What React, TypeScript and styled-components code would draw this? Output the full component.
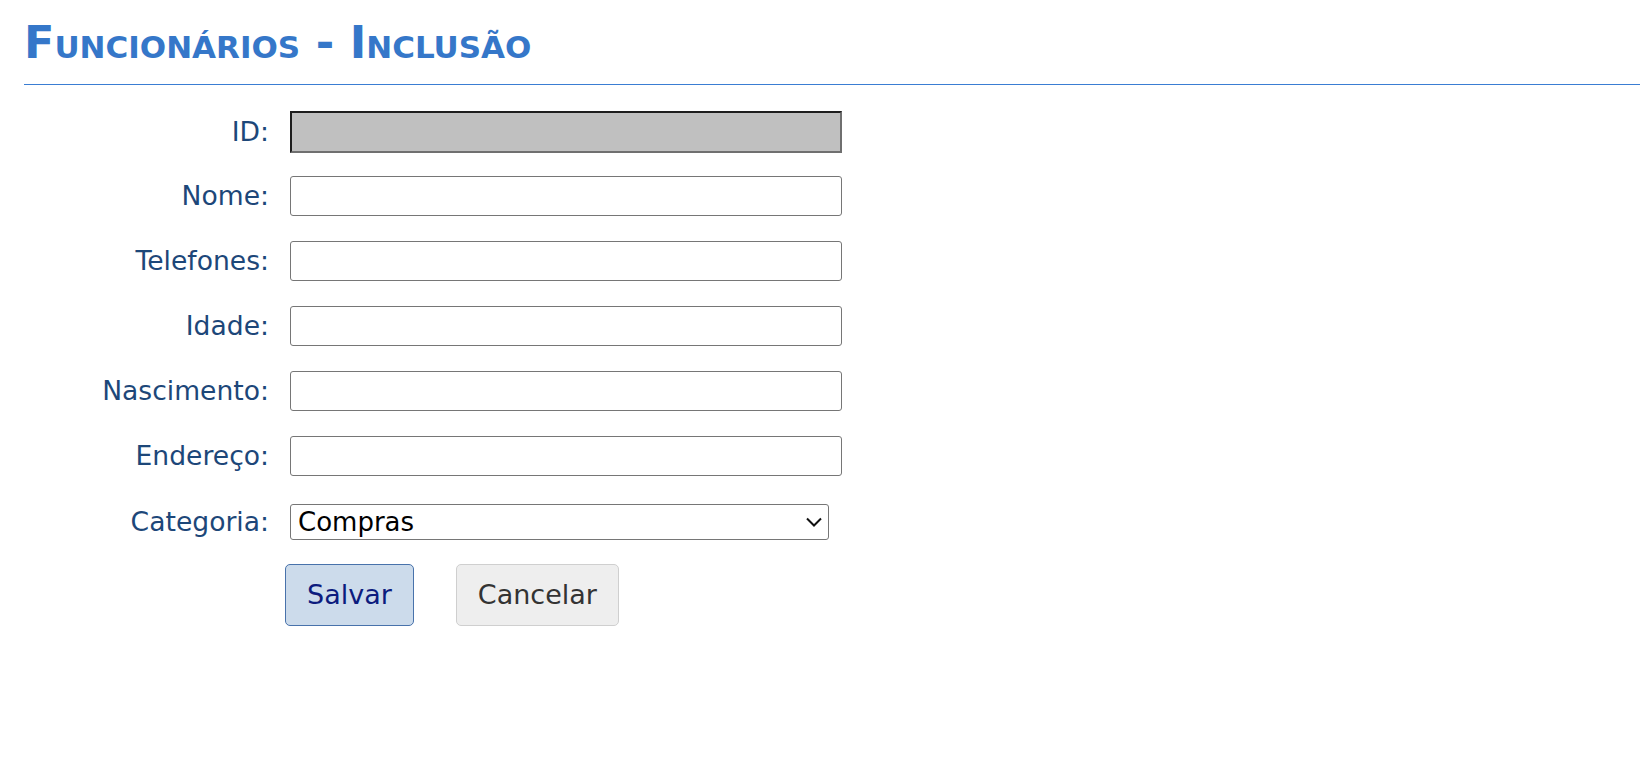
import React from "react";
import styled, { createGlobalStyle } from "styled-components";

const GlobalStyle = createGlobalStyle`
  html, body {
    margin: 0;
    padding: 0;
    background: #ffffff;
  }
  body {
    font-family: "DejaVu Sans", Verdana, sans-serif;
  }
  * {
    box-sizing: border-box;
  }
`;

const Page = styled.div`
  padding-left: 24px;
`;

const Header = styled.header`
  border-bottom: 1px solid #3a7dd3;
  padding: 16.5px 0 16px 0;
`;

const Title = styled.h1`
  margin: 0;
  font-family: "DejaVu Sans", Verdana, sans-serif;
  font-size: 44.5px;
  font-weight: bold;
  font-variant: small-caps;
  line-height: normal;
  color: #3577c9;
`;

const Form = styled.form`
  display: flex;
  flex-direction: column;
  margin-top: 26px;
`;

const Row = styled.div<{ $height: number; $gap: number }>`
  display: grid;
  grid-template-columns: 245px 552px;
  column-gap: 21px;
  align-items: center;
  height: ${(p) => p.$height}px;
  margin-bottom: ${(p) => p.$gap}px;
`;

const Label = styled.label`
  justify-self: end;
  font-family: "DejaVu Sans", Verdana, sans-serif;
  font-size: 26.6px;
  color: #1d4779;
  white-space: nowrap;
`;

const TextInput = styled.input`
  width: 552px;
  height: 40px;
  border: 1px solid #767676;
  border-radius: 3px;
  background: #ffffff;
  padding: 0 6px;
  font-family: "DejaVu Sans", Verdana, sans-serif;
  font-size: 26px;
  outline: none;
`;

const ReadOnlyInput = styled.input`
  width: 552px;
  height: 42px;
  border-style: solid;
  border-width: 2px;
  border-color: #1e1e1e #6f6f6f #6f6f6f #1e1e1e;
  border-radius: 0;
  background: #c0c0c0;
  padding: 0 6px;
  font-family: "DejaVu Sans", Verdana, sans-serif;
  font-size: 26px;
  outline: none;
`;

const SelectWrap = styled.div`
  position: relative;
  width: 539px;
  height: 36px;
`;

const Select = styled.select`
  appearance: none;
  -webkit-appearance: none;
  width: 539px;
  height: 36px;
  border: 1px solid #767676;
  border-radius: 3px;
  background: #ffffff;
  padding: 0 30px 0 7px;
  font-family: "DejaVu Sans", Verdana, sans-serif;
  font-size: 26px;
  color: #000000;
  outline: none;
`;

const Chevron = styled.svg`
  position: absolute;
  right: 7px;
  top: 13px;
  width: 16px;
  height: 10px;
  pointer-events: none;
`;

const ButtonBar = styled.div`
  grid-column: 2;
  display: flex;
  gap: 42px;
  margin-left: -5px;
`;

const Button = styled.button<{ $primary?: boolean }>`
  height: 62px;
  padding: 0 21px;
  border-radius: 5px;
  font-family: "DejaVu Sans", Verdana, sans-serif;
  font-size: 27px;
  cursor: pointer;
  border: 1px solid ${(p) => (p.$primary ? "#4872ab" : "#cfcfcf")};
  background: ${(p) => (p.$primary ? "#ccdbeb" : "#eeeeee")};
  color: ${(p) => (p.$primary ? "#0c1c7e" : "#333333")};
`;

const fields = ["Nome", "Telefones", "Idade", "Nascimento", "Endereço"];

export default function App() {
  return (
    <>
      <GlobalStyle />
      <Page>
        <Header>
          <Title>Funcionários - Inclusão</Title>
        </Header>
        <Form onSubmit={(e) => e.preventDefault()}>
          <Row $height={40} $gap={25}>
            <Label htmlFor="id">ID:</Label>
            <ReadOnlyInput id="id" readOnly />
          </Row>
          {fields.map((f, i) => (
            <Row key={f} $height={40} $gap={i === fields.length - 1 ? 28 : 25}>
              <Label htmlFor={f}>{f}:</Label>
              <TextInput id={f} type="text" />
            </Row>
          ))}
          <Row $height={36} $gap={24}>
            <Label htmlFor="categoria">Categoria:</Label>
            <SelectWrap>
              <Select id="categoria" defaultValue="Compras">
                <option>Compras</option>
                <option>Vendas</option>
                <option>Financeiro</option>
              </Select>
              <Chevron viewBox="0 0 16 10">
                <path d="M1 1.5 L8 8.5 L15 1.5" fill="none" stroke="#111" strokeWidth="2" />
              </Chevron>
            </SelectWrap>
          </Row>
          <Row $height={62} $gap={0}>
            <ButtonBar>
              <Button $primary type="submit">Salvar</Button>
              <Button type="button">Cancelar</Button>
            </ButtonBar>
          </Row>
        </Form>
      </Page>
    </>
  );
}
